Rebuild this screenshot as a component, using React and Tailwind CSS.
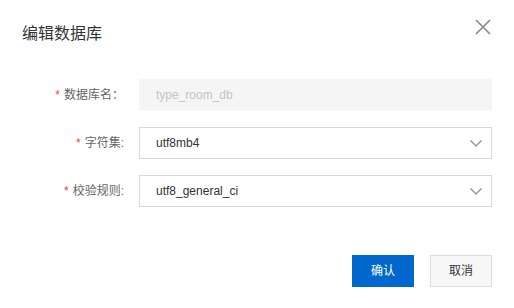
import React from "react";

const font = { fontFamily: '"Liberation Sans", "Noto Sans CJK SC", sans-serif' };

function Chevron() {
  return (
    <svg width="12" height="7" viewBox="0 0 12 7" className="absolute right-[10px] top-[13px]">
      <path d="M0.5 0.5 L6 6 L11.5 0.5" fill="none" stroke="#888" strokeWidth="1.2" />
    </svg>
  );
}

function Row({ label, children }) {
  return (
    <div className="flex items-center h-8 gap-[15px]">
      <div className="w-[102px] text-right text-[12px] text-[#666]">
        <span className="text-[#f04134] mr-1">*</span>
        {label}
      </div>
      <div className="flex-1 h-8 relative">{children}</div>
    </div>
  );
}

export default function App() {
  return (
    <div className="w-[514px] h-[308px] bg-white relative px-[22px] pt-[23px]" style={font}>
      <h2 className="text-[16px] leading-[22px] text-[#333]">编辑数据库</h2>
      <button className="absolute left-[475px] top-[19px] w-4 h-4">
        <svg width="16" height="16" viewBox="0 0 16 16">
          <path d="M1 1 L15 15 M15 1 L1 15" stroke="#888" strokeWidth="1.6" />
        </svg>
      </button>

      <div className="mt-[34px] flex flex-col gap-4">
        <Row label="数据库名：">
          <div className="h-8 bg-[#f5f5f5] pl-[17px] flex items-center text-[12px] text-[#c4c4c4]">
            type_room_db
          </div>
        </Row>
        <Row label="字符集:">
          <div className="h-8 border border-[#d9d9d9] pl-4 flex items-center text-[12px] text-[#333]">
            utf8mb4
          </div>
          <Chevron />
        </Row>
        <Row label="校验规则:">
          <div className="h-8 border border-[#d9d9d9] pl-4 flex items-center text-[12px] text-[#333]">
            utf8_general_ci
          </div>
          <Chevron />
        </Row>
      </div>

      <div className="mt-12 flex justify-end gap-4">
        <button className="w-[62px] h-8 bg-[#0068cc] text-white text-[12px]">确认</button>
        <button className="w-[62px] h-8 bg-[#f7f7f7] border border-[#dcdcdc] text-[#333] text-[12px]">
          取消
        </button>
      </div>
    </div>
  );
}
